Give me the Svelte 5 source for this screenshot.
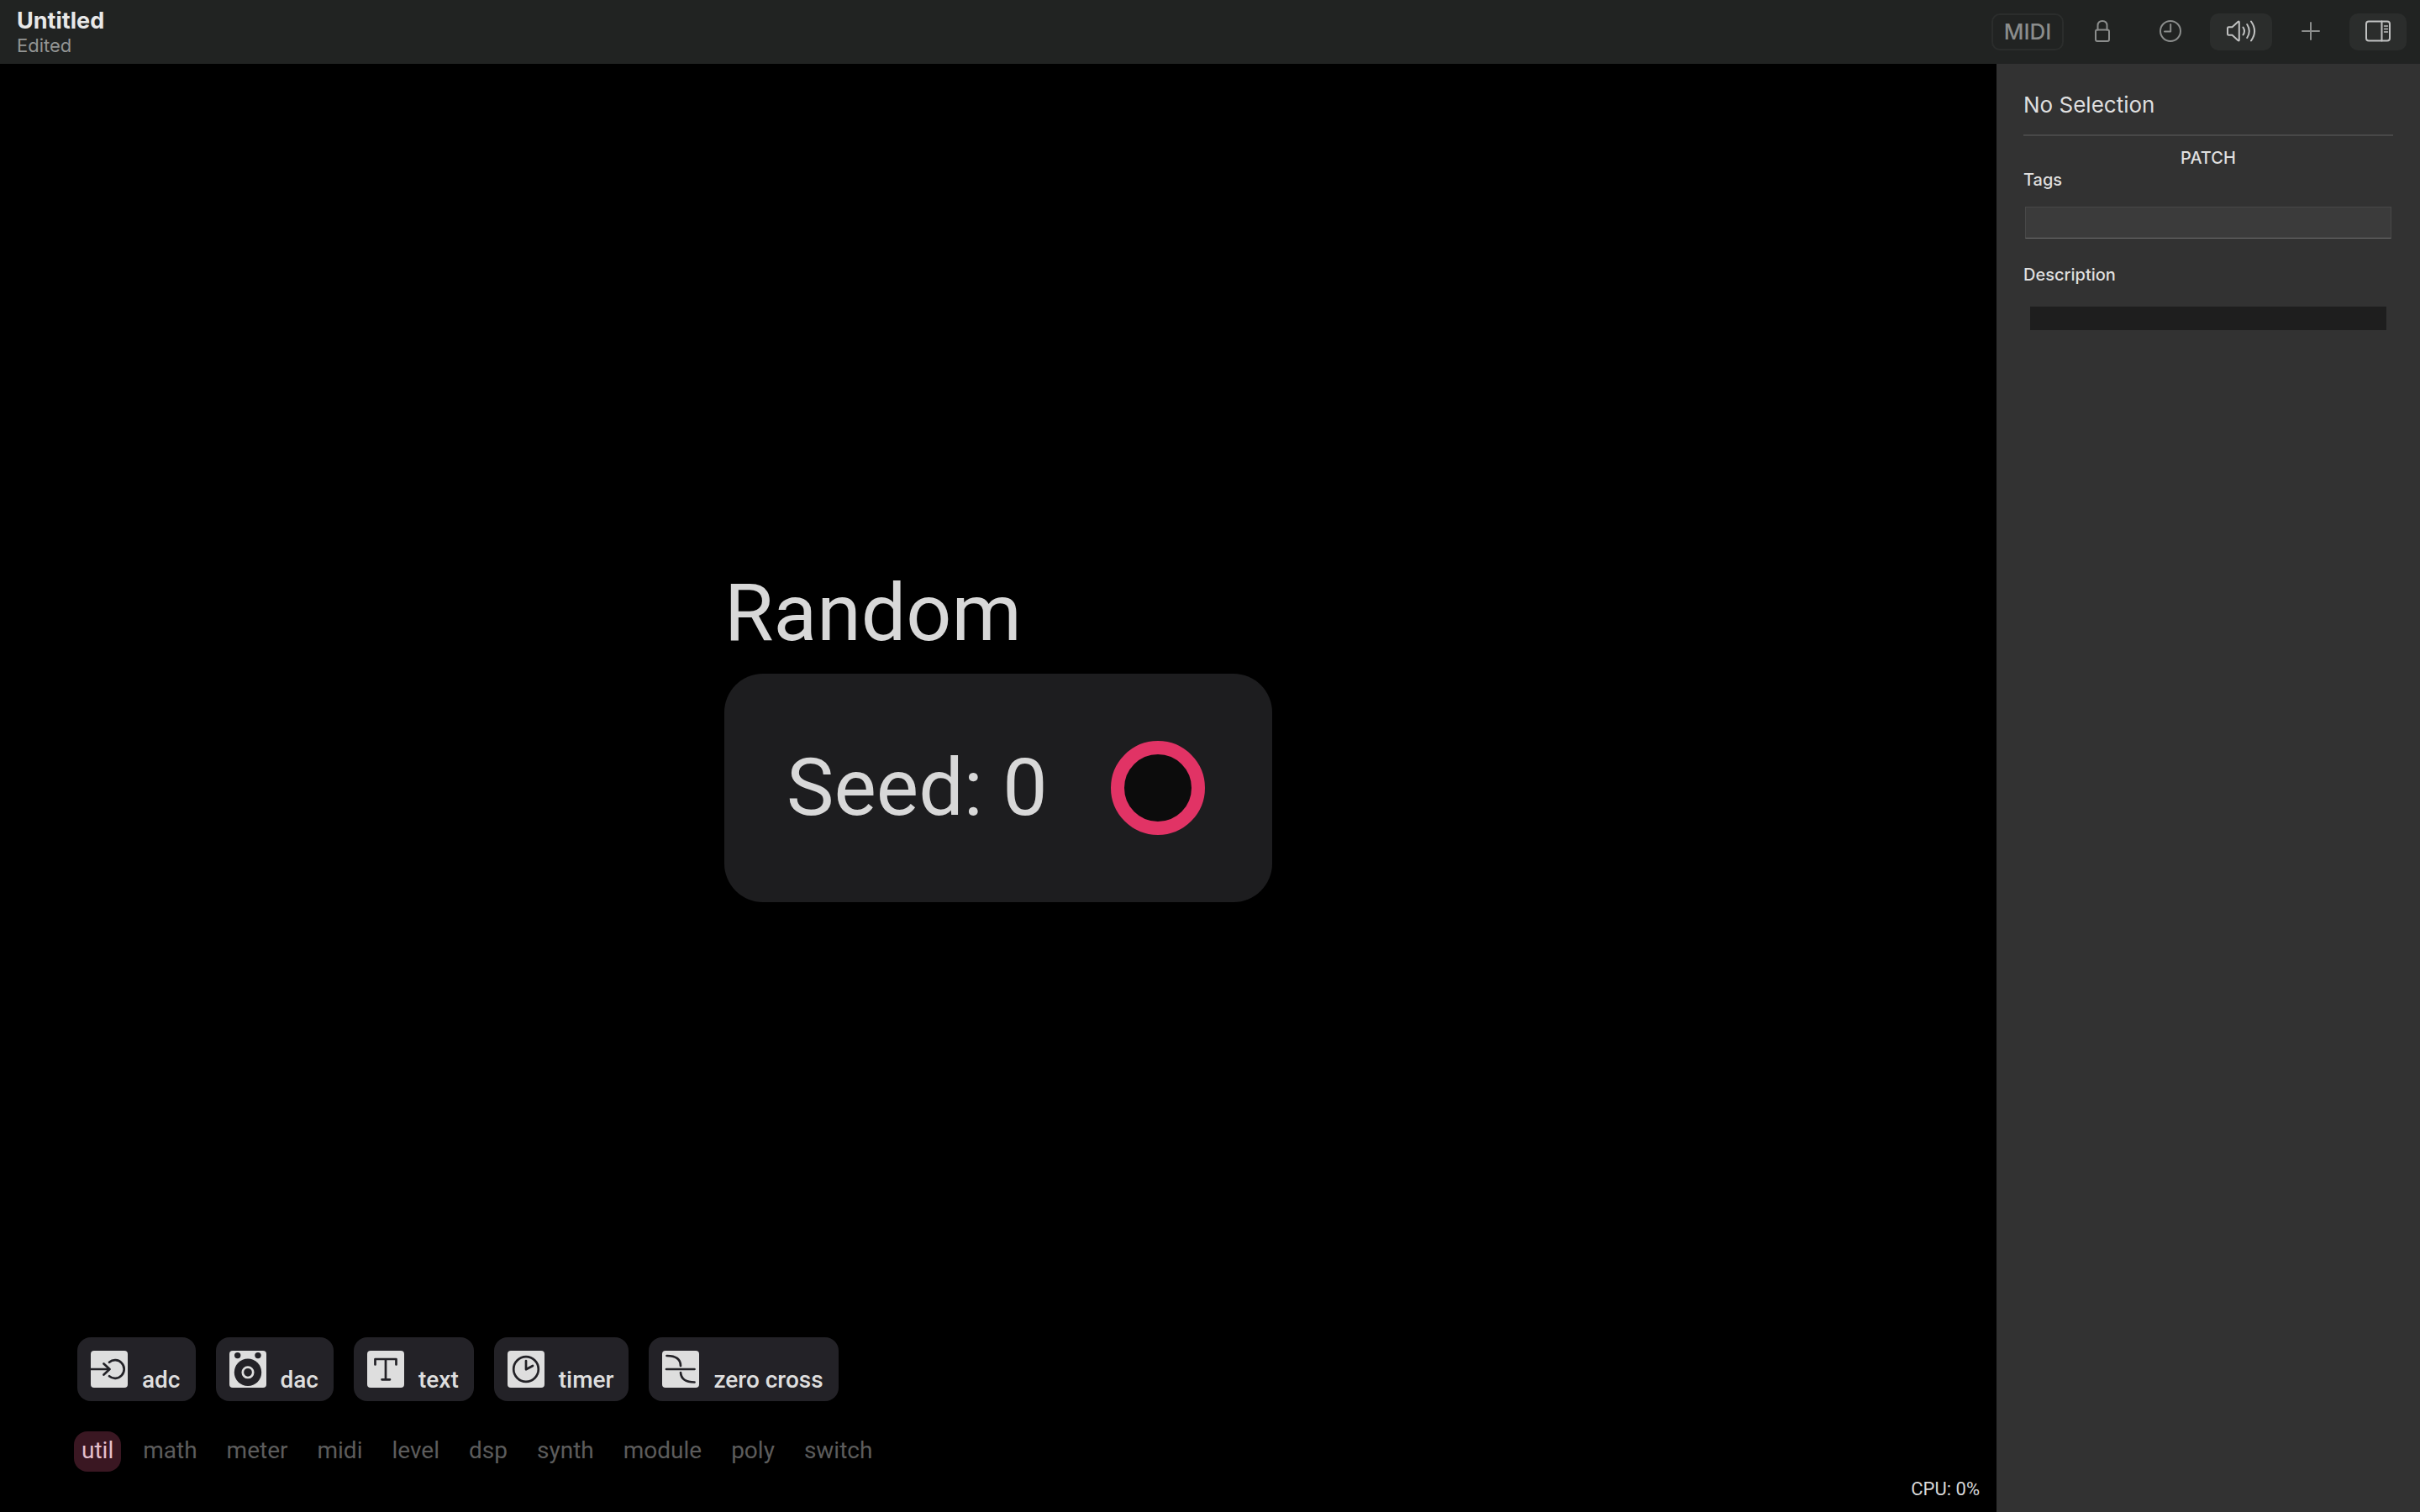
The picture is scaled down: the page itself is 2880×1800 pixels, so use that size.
<script>
  const tools = [
    { id: 'adc', label: 'adc' },
    { id: 'dac', label: 'dac' },
    { id: 'text', label: 'text' },
    { id: 'timer', label: 'timer' },
    { id: 'zero', label: 'zero cross' }
  ];
  const categories = ['util', 'math', 'meter', 'midi', 'level', 'dsp', 'synth', 'module', 'poly', 'switch'];

  let active = $state('util');
  let seed = $state(0);
  let tags = $state('');
  let description = $state('');
</script>

<div class="app">
  <header class="toolbar">
    <div class="document">
      <h1>Untitled</h1>
      <p>Edited</p>
    </div>
    <div class="actions">
      <button class="action midi" type="button">MIDI</button>
      <button class="action" type="button" aria-label="Lock">
        <svg width="18" height="26" viewBox="0 0 18 26">
          <rect x="1" y="11.5" width="16" height="13.5" rx="2" />
          <path d="M3.5 11.5V6.5C3.5 3 5.8 1 9 1s5.500 2 5.500 5.500v5" />
        </svg>
      </button>
      <button class="action medium" type="button" aria-label="Clock">
        <svg width="26" height="26" viewBox="0 0 26 26">
          <circle cx="13" cy="13" r="12" />
          <path d="M13.200 5V13.500H6" />
        </svg>
      </button>
      <button class="action filled wide" type="button" aria-label="Sound">
        <svg width="36" height="26" viewBox="0 0 36 26">
          <path d="M2 9.500Q2 8.200 3.300 8.200H7.500L14.600 1.800Q15.800 1 15.800 2.500V23.500Q15.800 25 14.600 24.200L7.500 17.800H3.300Q2 17.800 2 16.500Z" />
          <path d="M20.500 8.500q3 4.500 0 9M25.200 5q5.200 8 0 16M30 1.500q8.200 11.500 0 23" />
        </svg>
      </button>
      <button class="action" type="button" aria-label="Add">
        <svg width="22" height="22" viewBox="0 0 22 22">
          <path d="M11 1V21M1 11H21" />
        </svg>
      </button>
      <button class="action filled" type="button" aria-label="Toggle inspector">
        <svg width="30" height="26" viewBox="0 0 30 26">
          <rect x="1" y="1.500" width="28" height="23" rx="3" />
          <path d="M19.500 1.500V24.500" />
          <path class="fine" d="M22.500 7h4M22.500 10.500h4M22.500 14h4" />
        </svg>
      </button>
    </div>
  </header>

  <div class="workspace">
    <main class="canvas">
      <h2 class="node-title">Random</h2>
      <section class="node" aria-label="Random">
        <span>Seed: {seed}</span>
        <button class="port" type="button" aria-label="Output"></button>
      </section>

      <div class="dock">
        <div class="palette">
          <div class="tools">
            {#each tools as tool (tool.id)}
              <button class="tool" type="button">
                <svg width="44" height="44" viewBox="0 0 44 44">
                  <rect class="tile" width="44" height="44" rx="4" />
                  {#if tool.id === 'adc'}
                    <path d="M0 22H22M15.500 15.500L22.500 22L15.500 28.500" />
                    <path d="M22 13.700A10.800 10.800 0 1 1 22 30.300" />
                  {:else if tool.id === 'dac'}
                    <circle class="solid" cx="9.700" cy="5.600" r="3.700" />
                    <circle class="solid" cx="34" cy="5.600" r="3.700" />
                    <circle class="solid" cx="22" cy="25.800" r="16.200" />
                    <circle class="ring" cx="22" cy="25.800" r="6.200" />
                  {:else if tool.id === 'text'}
                    <path d="M9.500 16.500V10H34.500V16.500M22 10V34M17.500 34.300H27" />
                  {:else if tool.id === 'timer'}
                    <circle cx="22" cy="22" r="14.800" />
                    <path d="M22 12V22.300L30 18" />
                  {:else}
                    <path d="M5.500 6C16 6 22 10 22 18M5 22H38.500M22 26C22.500 33 28 37.500 38.500 37.500" />
                  {/if}
                </svg>
                <span>{tool.label}</span>
              </button>
            {/each}
          </div>
          <nav class="categories" aria-label="Categories">
            {#each categories as name (name)}
              <button
                type="button"
                class="category"
                class:active={active === name}
                aria-pressed={active === name}
                onclick={() => (active = name)}>{name}</button>
            {/each}
          </nav>
        </div>
        <p class="cpu">CPU: 0%</p>
      </div>
    </main>

    <aside class="inspector">
      <h2>No Selection</h2>
      <h3>PATCH</h3>
      <label for="tags">Tags</label>
      <input id="tags" type="text" bind:value={tags} />
      <label for="description">Description</label>
      <textarea id="description" rows="1" bind:value={description}></textarea>
    </aside>
  </div>
</div>

<style>
  :global(body) {
    margin: 0;
    background: #000;
  }

  h1,
  h2,
  h3,
  p {
    margin: 0;
    font-weight: 400;
  }

  button {
    margin: 0;
    padding: 0;
    border: 0;
    background: none;
    color: inherit;
    font: inherit;
    cursor: pointer;
  }

  svg {
    display: block;
    flex: none;
    fill: none;
    stroke: currentColor;
    stroke-width: 2;
    stroke-linecap: round;
    stroke-linejoin: round;
  }

  .app {
    display: flex;
    flex-direction: column;
    min-height: 100vh;
    font-family: Inter, "Liberation Sans", sans-serif;
    color: #dfdfdf;
  }

  /* Toolbar */
  .toolbar {
    display: flex;
    align-items: center;
    justify-content: space-between;
    box-sizing: border-box;
    height: 76px;
    padding: 0 16px 0 20px;
    background: #212322;
  }

  .document h1 {
    padding-top: 2px;
    font-size: 27px;
    line-height: 30px;
    font-weight: 700;
    color: #e8e8e8;
  }

  .document p {
    font-size: 22px;
    line-height: 28px;
    color: #939594;
  }

  .actions {
    display: flex;
    align-items: center;
    gap: 12px;
  }

  .action {
    display: flex;
    align-items: center;
    justify-content: center;
    box-sizing: border-box;
    width: 68px;
    height: 44px;
    padding-bottom: 2px;
    border-radius: 10px;
    color: #8b8d8c;
  }

  .action.midi {
    width: 86px;
    border: 2px solid #2b2d2c;
    font-size: 26px;
    font-weight: 500;
  }

  .action.filled {
    background: #2b2d2c;
    color: #c0c1c1;
  }

  .action.medium {
    width: 70px;
  }

  .action.wide {
    width: 74px;
  }

  .fine {
    stroke-width: 1.5;
  }

  .workspace {
    display: flex;
    flex: 1;
  }

  /* Patch canvas */
  .canvas {
    display: grid;
    flex: 1;
    grid-template: 1fr auto 1fr / 1fr auto 1fr;
    font-family: Roboto, "Liberation Sans", sans-serif;
    color: #d8d8d8;
  }

  .node-title,
  .node {
    grid-column: 2;
    font-size: 95px;
    line-height: 112px;
  }

  .node-title {
    align-self: end;
    margin-bottom: 16px;
  }

  .node {
    display: flex;
    align-items: center;
    justify-content: space-between;
    box-sizing: border-box;
    min-width: 652px;
    padding: 80px 80px 80px 74px;
    border-radius: 46px;
    background: #1d1d1f;
  }

  .port {
    box-sizing: border-box;
    width: 112px;
    height: 112px;
    border: 16px solid #e13365;
    border-radius: 50%;
    background: #0c0c0c;
  }

  .dock {
    display: flex;
    grid-column: 1 / -1;
    align-items: flex-end;
    justify-content: space-between;
    padding: 0 20px 0 88px;
    font-size: 28px;
    line-height: 32px;
  }

  .palette {
    display: flex;
    flex-direction: column;
    gap: 36px;
    padding-bottom: 48px;
  }

  .tools {
    display: flex;
    gap: 24px;
    padding-left: 4px;
  }

  .tool {
    display: flex;
    align-items: flex-end;
    gap: 17px;
    height: 76px;
    padding: 16px 18px 16px 16px;
    box-sizing: border-box;
    border-radius: 16px;
    background: #232227;
    color: #dedede;
    font-weight: 500;
  }

  .tool svg {
    stroke: #232227;
    stroke-width: 2.700;
  }

  .tool span {
    line-height: 30px;
    margin-bottom: -6px;
  }

  .tile {
    fill: #dedede;
    stroke: none;
  }

  .solid {
    fill: #232227;
    stroke: none;
  }

  .tool .ring {
    stroke: #dedede;
  }

  .categories {
    display: flex;
    gap: 17px;
  }

  .category {
    height: 48px;
    padding: 0 9px 2px;
    border-radius: 16px;
    color: #5c5c5c;
  }

  .category.active {
    background: #3a1722;
    color: #e5bfcb;
  }

  .cpu {
    padding-bottom: 11px;
    font-size: 22px;
  }

  /* Inspector */
  .inspector {
    display: flex;
    flex: none;
    flex-direction: column;
    box-sizing: border-box;
    width: 504px;
    padding: 32px 32px 0;
    background: #323232;
    font-size: 20px;
    line-height: 26px;
  }

  .inspector h2 {
    padding-bottom: 18px;
    border-bottom: 2px solid #484848;
    font-size: 26px;
    line-height: 34px;
  }

  .inspector h3 {
    margin-top: 13px;
    font-size: 20px;
    font-weight: 500;
    text-align: center;
  }

  .inspector label {
    font-weight: 500;
  }

  .inspector input {
    box-sizing: border-box;
    height: 38px;
    margin: 19px 2px 30px;
    padding: 0 8px;
    border: 1px solid #484848;
    border-bottom-color: #707070;
    border-radius: 0;
    outline: 0;
    background: #3b3b3b;
    color: inherit;
    font: inherit;
  }

  .inspector textarea {
    box-sizing: border-box;
    height: 28px;
    margin: 25px 8px 0;
    padding: 0 8px;
    border: 0;
    outline: 0;
    resize: none;
    overflow: hidden;
    background: #1e1e1e;
    color: inherit;
    font: inherit;
  }
</style>
